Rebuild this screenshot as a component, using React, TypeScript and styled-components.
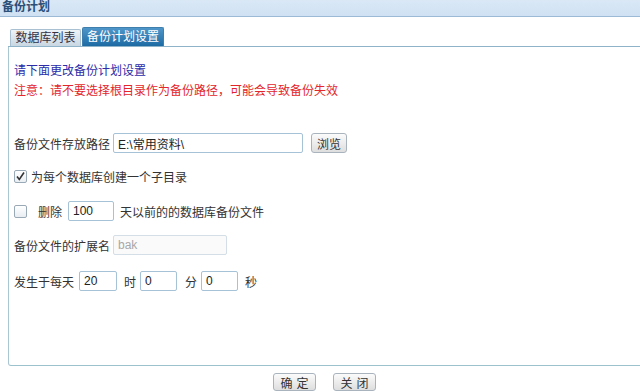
import styled, { createGlobalStyle } from 'styled-components';

const Global = createGlobalStyle`
  html, body { margin: 0; padding: 0; background: #fff; }
  body {
    font-family: "Liberation Sans", "Noto Sans CJK SC", sans-serif;
    font-size: 12px;
    color: #333;
    overflow: hidden;
  }
`;

const Window = styled.div`
  width: 640px;
  height: 391px;
  display: flex;
  flex-direction: column;
`;

const TitleBar = styled.div`
  height: 20px;
  background: linear-gradient(#dae8f6, #cfe1f3);
  border-bottom: 1px solid #9cbad6;
  font-size: 12px;
  font-weight: bold;
  color: #2a4f78;
  line-height: 14px;
  padding-left: 2px;
  box-sizing: border-box;
`;

const Body = styled.div`
  padding: 9px 0 0 8px;
  display: flex;
  flex-direction: column;
`;

const TabStrip = styled.div`
  display: flex;
  align-items: flex-end;
  gap: 1px;
  padding-left: 2px;
  height: 20px;
  border-bottom: 1px solid #8fb4c9;
`;

const Tab = styled.div<{ $active?: boolean; $w: number }>`
  width: ${p => p.$w}px;
  height: ${p => (p.$active ? 19 : 17)}px;
  text-align: center;
  font-size: 12px;
  line-height: ${p => (p.$active ? 18 : 16)}px;
  border: 1px solid ${p => (p.$active ? '#3f7fae' : '#a8c0d2')};
  border-bottom: none;
  border-radius: 2px 2px 0 0;
  box-sizing: border-box;
  color: ${p => (p.$active ? '#fff' : '#334')};
  background: ${p =>
    p.$active ? 'linear-gradient(#4f97c9, #1d6aa3)' : 'linear-gradient(#eef3f7, #c9d7e2)'};
`;

const Panel = styled.div`
  height: 319px;
  border-left: 1px solid #a9c6d3;
  border-bottom: 1px solid #9cc3cd;
  border-radius: 0 0 0 3px;
  padding: 14px 0 0 5px;
  box-sizing: border-box;
  display: flex;
  flex-direction: column;
`;

const Note = styled.div<{ $color: string }>`
  color: ${p => p.$color};
  line-height: 20px;
`;

const Row = styled.div<{ $gap?: number }>`
  display: flex;
  align-items: center;
  height: 20px;
  margin-top: ${p => p.$gap ?? 0}px;
`;

const Label = styled.span<{ $w?: number; $ml?: number }>`
  width: ${p => (p.$w ? `${p.$w}px` : 'auto')};
  margin-left: ${p => p.$ml ?? 0}px;
  white-space: nowrap;
`;

const Input = styled.input<{ $w: number }>`
  width: ${p => p.$w}px;
  height: 20px;
  box-sizing: border-box;
  border: 1px solid #a6c2d6;
  border-radius: 2px;
  padding: 0 4px;
  font-family: inherit;
  font-size: 12px;
  color: #222;
  background: #fff;
  outline: none;
  &:disabled {
    background: #fafafa;
    color: #a8a8a8;
    border-color: #d3dee6;
  }
`;

const Btn = styled.button<{ $w: number }>`
  width: ${p => p.$w}px;
  height: ${p => (p.$w > 40 ? 18 : 20)}px;
  padding: 0;
  font-family: inherit;
  font-size: 12px;
  color: #333;
  letter-spacing: ${p => (p.$w > 40 ? 4 : 0)}px;
  text-indent: ${p => (p.$w > 40 ? 4 : 0)}px;
  border: 1px solid #a9b3bd;
  border-radius: 3px;
  background: linear-gradient(#fbfbfb, #dedede);
`;

const Check = styled.span`
  width: 13px;
  height: 13px;
  box-sizing: border-box;
  border: 1px solid #9aa9b6;
  border-radius: 2px;
  background: linear-gradient(#ffffff, #e9eef2);
  display: flex;
  align-items: center;
  justify-content: center;
`;

const Footer = styled.div`
  display: flex;
  gap: 17px;
  padding: 7px 0 0 265px;
`;

function CheckBox({ on }: { on?: boolean }) {
  return (
    <Check>
      {on && (
        <svg width="11" height="11" viewBox="0 0 11 11">
          <path d="M2 5.5 L4.3 8.5 L9 1.5" fill="none" stroke="#333" strokeWidth="1.6" />
        </svg>
      )}
    </Check>
  );
}

export default function App() {
  return (
    <Window>
      <Global />
      <TitleBar>备份计划</TitleBar>
      <Body>
        <TabStrip>
          <Tab $w={71}>数据库列表</Tab>
          <Tab $w={82} $active>备份计划设置</Tab>
        </TabStrip>
        <Panel>
          <Note $color="#2c2ca8">请下面更改备份计划设置</Note>
          <Note $color="#e3262b">注意：请不要选择根目录作为备份路径，可能会导致备份失效</Note>
          <Row $gap={32}>
            <Label $w={99}>备份文件存放路径</Label>
            <Input $w={190} defaultValue="E:\常用资料\" />
            <Label $ml={8}>
              <Btn $w={36}>浏览</Btn>
            </Label>
          </Row>
          <Row $gap={13}>
            <CheckBox on />
            <Label $ml={4}>为每个数据库创建一个子目录</Label>
          </Row>
          <Row $gap={15}>
            <CheckBox />
            <Label $ml={11}>删除</Label>
            <Label $ml={6}>
              <Input $w={46} defaultValue="100" />
            </Label>
            <Label $ml={6}>天以前的的数据库备份文件</Label>
          </Row>
          <Row $gap={14}>
            <Label $w={99}>备份文件的扩展名</Label>
            <Input $w={114} defaultValue="bak" disabled />
          </Row>
          <Row $gap={16}>
            <Label $w={65}>发生于每天</Label>
            <Input $w={38} defaultValue="20" />
            <Label $ml={7}>时</Label>
            <Label $ml={4}>
              <Input $w={37} defaultValue="0" />
            </Label>
            <Label $ml={8}>分</Label>
            <Label $ml={4}>
              <Input $w={37} defaultValue="0" />
            </Label>
            <Label $ml={7}>秒</Label>
          </Row>
        </Panel>
        <Footer>
          <Btn $w={43}>确定</Btn>
          <Btn $w={43}>关闭</Btn>
        </Footer>
      </Body>
    </Window>
  );
}
